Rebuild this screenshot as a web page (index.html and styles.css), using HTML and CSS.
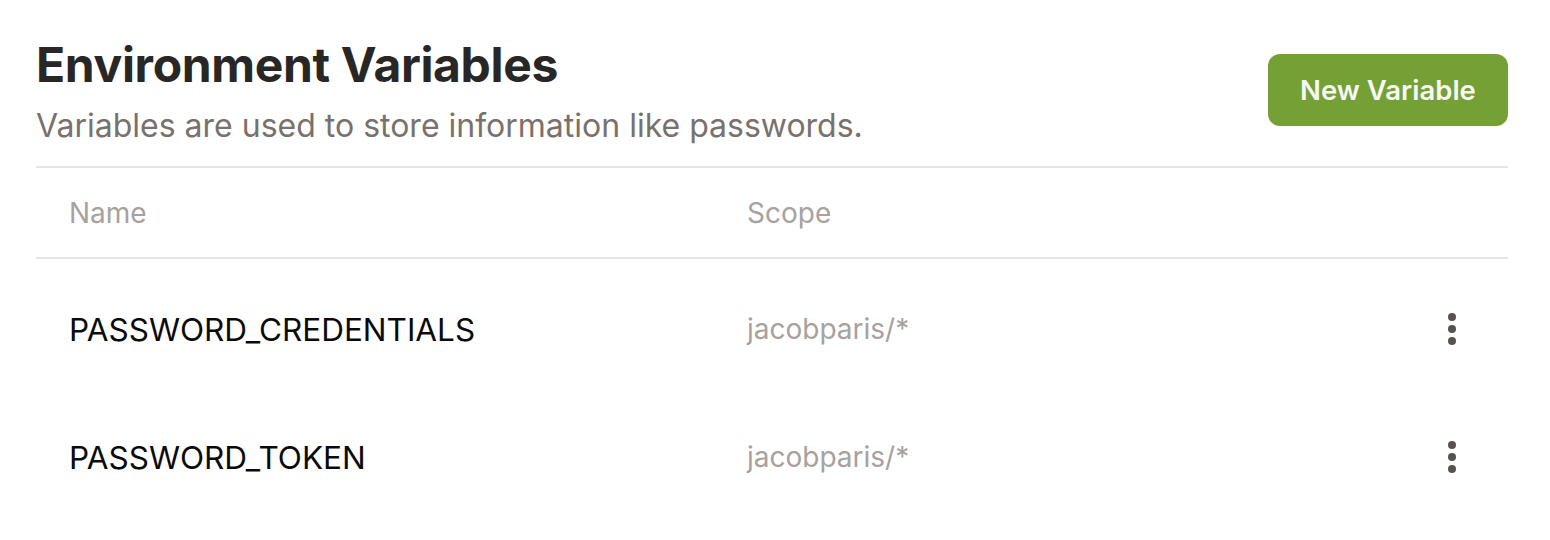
FILE: index.html
```html
<!DOCTYPE html>
<html>
<head>
<meta charset="utf-8">
<link rel="stylesheet" href="styles.css">
</head>
<body>
<div class="page">
  <header class="head">
    <div class="head-text">
      <h1 class="title">Environment Variables</h1>
      <p class="subtitle">Variables are used to store information like passwords.</p>
    </div>
    <button class="btn">New Variable</button>
  </header>
  <div class="table">
    <div class="thead">
      <div class="cell name">Name</div>
      <div class="cell scope">Scope</div>
      <div class="cell act"></div>
    </div>
    <div class="tbody">
      <div class="row">
        <div class="cell name">PASSWORD_CREDENTIALS</div>
        <div class="cell scope">jacobparis/*</div>
        <div class="cell act"><span class="dots"><i></i><i></i><i></i></span></div>
      </div>
      <div class="row">
        <div class="cell name">PASSWORD_TOKEN</div>
        <div class="cell scope">jacobparis/*</div>
        <div class="cell act"><span class="dots"><i></i><i></i><i></i></span></div>
      </div>
    </div>
  </div>
</div>
</body>
</html>
```
FILE: styles.css
```css
* { box-sizing: border-box; }
html, body { margin: 0; background: #fff; }
body { font-family: Inter, "Noto Sans", sans-serif; }
.page { padding: 0 42px 0 36px; }
.head { display: flex; justify-content: space-between; align-items: flex-start; padding-top: 37px; height: 168px; border-bottom: 2px solid #e6e5e4; }
.title { margin: 0; font-size: 48px; font-weight: 700; line-height: 56px; color: #292626; letter-spacing: -0.35px; }
.subtitle { margin: 13px 0 0; font-size: 32px; line-height: 40px; color: #78716c; }
.btn { margin-top: 17px; width: 240px; height: 72px; border: 0; border-radius: 12px; background: #74a035; color: #f7f8f4; font-family: Inter, sans-serif; font-size: 27.5px; font-weight: 600; }
.thead { display: grid; grid-template-columns: 711px 1fr 112px; height: 91px; align-items: center; border-bottom: 2px solid #e6e5e4; color: #a8a29e; font-size: 28px; }
.thead .name, .row .name { padding-left: 33px; }
.tbody { padding-top: 6px; }
.row { display: grid; grid-template-columns: 711px 1fr 112px; height: 128px; align-items: center; font-size: 31.5px; }
.row .name { color: #0a0a0a; }
.row .scope { color: #a8a29e; font-size: 28px; }
.act { display: flex; justify-content: center; }
.dots { display: flex; flex-direction: column; gap: 4px; }
.dots i { width: 8px; height: 8px; border-radius: 50%; background: #57534e; }
```
